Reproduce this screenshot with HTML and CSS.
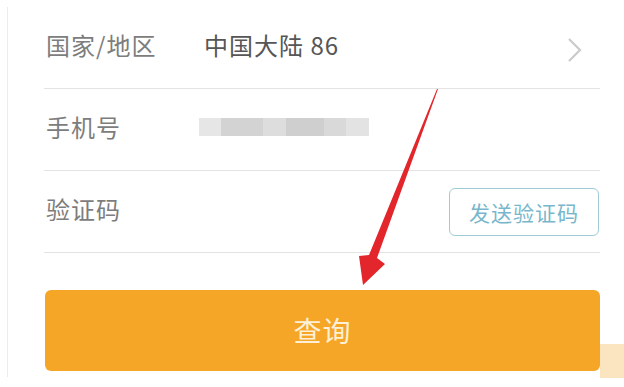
FILE: index.html
```html
<!DOCTYPE html>
<html lang="zh-CN">

<head>
    <meta charset="UTF-8">
    <meta name="viewport" content="width=device-width, initial-scale=1.0">
    <title>查询</title>
    <link rel="stylesheet" href="styles.css">
</head>

<body>
    <section class="page">
        <!-- 表单 -->
        <ul class="form-list">
            <li class="form-row">
                <span class="form-label">国家/地区</span>
                <span class="form-value">中国大陆 86</span>
                <svg class="chevron" width="16" height="26" viewBox="0 0 16 26">
                    <polyline points="2,2 13,13 2,24" fill="none" stroke="#cbcbcb" stroke-width="2.2" />
                </svg>
            </li>
            <li class="form-row">
                <span class="form-label">手机号</span>
                <span class="phone-blur"></span>
            </li>
            <li class="form-row">
                <span class="form-label">验证码</span>
                <button class="send-code">发送验证码</button>
            </li>
        </ul>
        <button class="submit">查询</button>

        <!-- 标注箭头 -->
        <svg class="arrow" width="624" height="387" viewBox="0 0 624 387">
            <polygon points="438,89 377,258 385,264 363,285 359,256 369,255 437,89" fill="#e3262b" />
        </svg>
        <span class="corner-patch"></span>
    </section>
</body>

</html>
```

FILE: styles.css
```css
* {
    box-sizing: border-box;
}

body {
    margin: 0;
    background: #fff;
    font-family: "Noto Sans CJK SC", "Noto Sans", sans-serif;
}

.page {
    margin: 8px 0 0 7px;
    height: 370px;
    border-left: 1px solid #ececec;
    padding: 0 24px 0 36px;
}

.form-list {
    list-style: none;
    margin: -1px 0 0;
    padding: 0;
}

.form-row {
    display: flex;
    align-items: center;
    height: 82px;
    border-bottom: 1px solid #e3e3e3;
    padding-left: 2px;
}

.form-label {
    width: 158px;
    font-size: 24px;
    letter-spacing: 1px;
    color: #7d7d7d;
    margin-bottom: 6px;
}

.form-value {
    flex: 1;
    font-size: 24px;
    letter-spacing: 1px;
    color: #565656;
    margin-bottom: 6px;
}

.chevron {
    margin: 4px 17px 0 0;
}

.phone-blur {
    width: 170px;
    height: 18px;
    margin: 0 0 6px -5px;
    background: linear-gradient(90deg,
            #e6e6e6 0, #e6e6e6 22px,
            #d3d3d3 22px, #d3d3d3 64px,
            #dddddd 64px, #dddddd 87px,
            #cfcfcf 87px, #cfcfcf 125px,
            #d9d9d9 125px, #d9d9d9 147px,
            #e3e3e3 147px);
}

.send-code {
    margin-left: auto;
    margin-right: 1px;
    width: 150px;
    height: 48px;
    border: 1.5px solid #9fcbd7;
    border-radius: 6px;
    background: #fff;
    color: #78b7cb;
    font-family: inherit;
    font-size: 21px;
    letter-spacing: 1px;
    padding: 0;
}

.submit {
    display: block;
    width: 555px;
    height: 81px;
    margin: 37px 0 0 1px;
    border: none;
    border-radius: 6px;
    background: #f5a626;
    color: #fdf0d6;
    font-family: inherit;
    font-size: 28px;
    letter-spacing: 1px;
    padding: 0 0 2px;
}

.arrow {
    position: absolute;
    left: 0;
    top: 0;
    pointer-events: none;
}

.corner-patch {
    position: absolute;
    left: 600px;
    top: 344px;
    width: 24px;
    height: 34px;
    background: #fbe4c0;
}
```
